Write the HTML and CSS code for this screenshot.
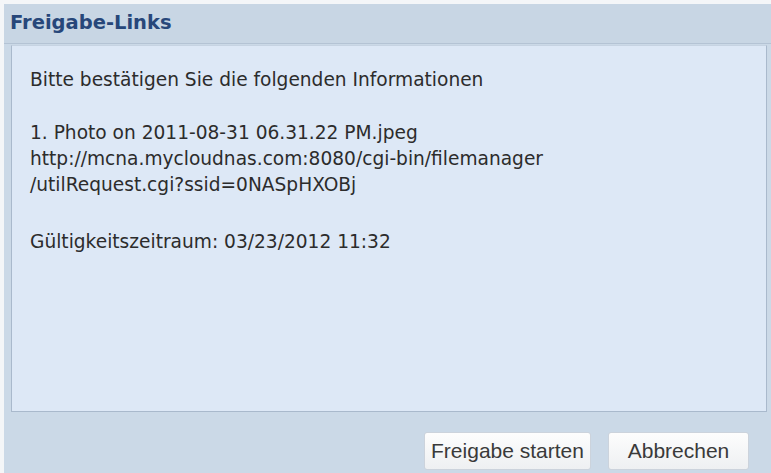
FILE: index.html
```html
<!DOCTYPE html>
<html lang="de">
<head>
<meta charset="utf-8">
<link rel="stylesheet" href="styles.css">
</head>
<body>
<div class="dialog">
  <div class="title">Freigabe-Links</div>
  <div class="panel">
    <p class="intro">Bitte bestätigen Sie die folgenden Informationen</p>
    <p class="item">1. Photo on 2011-08-31 06.31.22 PM.jpeg<br>http://mcna.mycloudnas.com:8080/cgi-bin/filemanager<br>/utilRequest.cgi?ssid=0NASpHXOBj</p>
    <p class="valid">Gültigkeitszeitraum: 03/23/2012 11:32</p>
  </div>
  <div class="footer">
    <button class="btn btn-start">Freigabe starten</button>
    <button class="btn btn-cancel">Abbrechen</button>
  </div>
</div>
</body>
</html>
```
FILE: styles.css
```css
html, body {
  margin: 0;
  padding: 0;
  background: #f4f6f8;
}
body {
  width: 771px;
  height: 473px;
  overflow: hidden;
  padding-top: 4px;
  padding-left: 4px;
  box-sizing: border-box;
}
.dialog {
  width: 767px;
  height: 469px;
  background: #cbd9e7;
  display: flex;
  flex-direction: column;
  box-sizing: border-box;
}
.title {
  height: 40px;
  box-sizing: border-box;
  padding: 7px 0 0 6px;
  font-family: "DejaVu Sans", sans-serif;
  font-weight: bold;
  font-size: 19.5px;
  color: #27477a;
  background: #c8d6e4;
  border-bottom: 1px solid #b4c3d4;
}
.panel {
  margin: 1px 4px 0 7px;
  height: 367px;
  box-sizing: border-box;
  background: #dde8f6;
  border: 1px solid #a9b9cc;
  border-top-color: #c6d3e2;
  padding: 21px 0 0 18px;
  font-family: "DejaVu Sans", sans-serif;
  font-size: 18.6px;
  color: #2c2c2c;
}
.panel p {
  margin: 0;
  line-height: 26px;
}
.panel .intro { margin-bottom: 27px; }
.panel .item { margin-bottom: 31px; }
.footer {
  flex: 1;
  display: flex;
  justify-content: flex-end;
  align-items: flex-start;
  gap: 17px;
  padding: 20px 22px 0 0;
}
.btn {
  height: 38px;
  box-sizing: border-box;
  border: 1px solid #ccd3dc;
  border-radius: 3px;
  background: linear-gradient(#fdfdfd, #eef0f2);
  font-family: "Liberation Sans", sans-serif;
  font-size: 21px;
  color: #3a3a3a;
  padding: 0;
}
.btn-start { width: 167px; }
.btn-cancel { width: 141px; }
```
